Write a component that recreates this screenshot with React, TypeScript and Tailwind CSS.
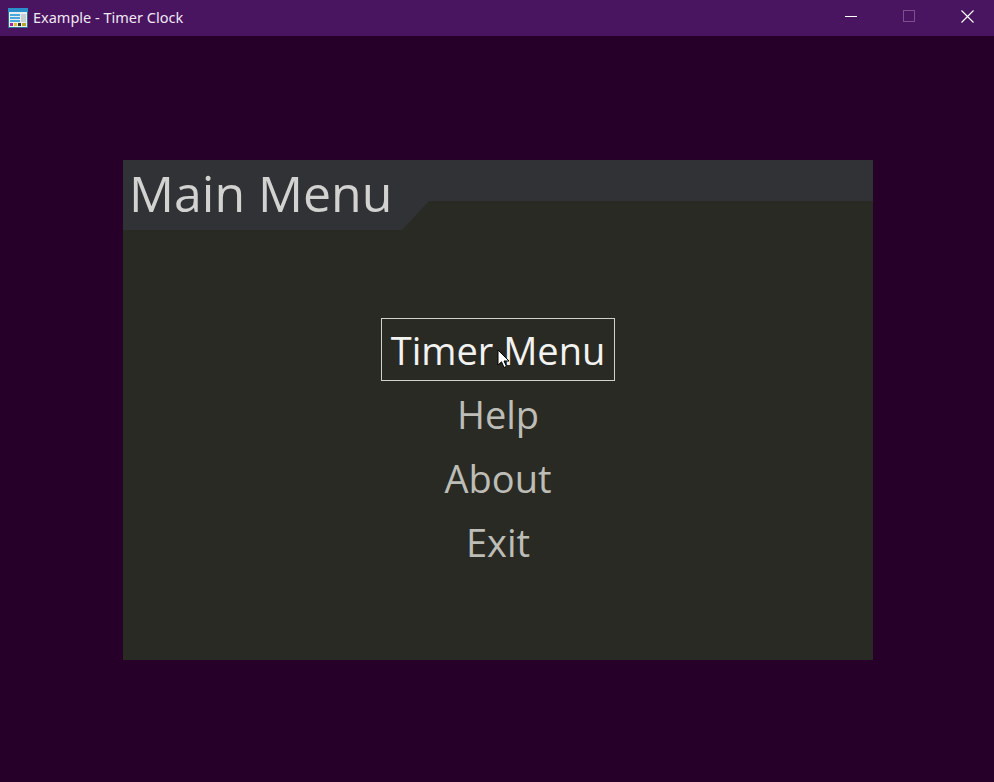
const items = ['Help', 'About', 'Exit'];

function AppIcon() {
  return (
    <svg width="20" height="20" viewBox="0 0 20 20" className="shrink-0">
      <rect x="0.5" y="0.5" width="19" height="19" fill="#e8eef2" stroke="#2a6f8f" />
      <rect x="0" y="0" width="20" height="4" fill="#2b8fc9" />
      <rect x="2" y="6" width="10" height="2" fill="#4aa8dc" />
      <rect x="2" y="9" width="10" height="2" fill="#4aa8dc" />
      <rect x="2" y="12" width="10" height="2" fill="#4aa8dc" />
      <rect x="13" y="6" width="5" height="8" fill="#c9ced3" />
      <rect x="2" y="15" width="3" height="3" fill="#b0249a" />
      <rect x="6" y="15" width="3" height="3" fill="#d8c82a" />
      <rect x="10" y="15" width="3" height="3" fill="#333333" />
      <rect x="14" y="15" width="4" height="3" fill="#b8a62a" />
    </svg>
  );
}

function TitleBar() {
  return (
    <div className="h-9 bg-[#4a1560] flex items-center justify-between pl-2">
      <div className="flex items-center gap-[5px] pb-[1px]">
        <AppIcon />
        <span className="text-[14.5px] text-[#f0e8f4] leading-none font-['Noto_Sans',sans-serif]">Example - Timer Clock</span>
      </div>
      <div className="flex items-center translate-x-[2px]">
        <div className="w-[58px] h-9 flex items-center justify-center">
          <div className="w-3 h-px bg-white -translate-y-[2px]" />
        </div>
        <div className="w-[58px] h-9 flex items-center justify-center">
          <div className="w-3 h-3 border border-[#7d4f90] -translate-y-[2px]" />
        </div>
        <div className="w-[58px] h-9 flex items-center justify-center">
          <svg width="13" height="13" viewBox="0 0 13 13" className="-translate-y-[2px]">
            <path d="M0.5 0.5L12.5 12.5M12.5 0.5L0.5 12.5" stroke="#ffffff" strokeWidth="1.1" />
          </svg>
        </div>
      </div>
    </div>
  );
}

export default function App() {
  return (
    <div className="w-[994px] h-[782px] bg-[#260028] overflow-hidden font-['Open_Sans',sans-serif]">
      <TitleBar />
      <div className="w-[750px] h-[500px] ml-[123px] mt-[124px] bg-[#2a2a24]">
        <div className="h-[70px] bg-[#313236] pl-[6px] [clip-path:polygon(0_0,100%_0,100%_41px,306px_41px,279px_100%,0_100%)]">
          <h1 className="text-[50px] leading-[67px] text-[#d2d2d0]">Main Menu</h1>
        </div>
        <div className="flex flex-col items-center mt-[88px]">
          <div className="relative w-[234px] h-[63px] mb-px border-[1.5px] border-[#d0d0cc] flex items-center justify-center text-[38px] leading-none text-[#f2f2f0]">
            Timer Menu
            <svg width="13" height="20" viewBox="0 0 13 20" className="absolute left-[115px] top-[30px]">
              <path d="M1 1V16L4.5 12.8L7 18.5L9.5 17.4L7 12H12Z" fill="#ffffff" stroke="#000000" strokeWidth="1" />
            </svg>
          </div>
          {items.map((item) => (
            <div key={item} className="h-[64px] flex items-center justify-center text-[38px] leading-none text-[#bdbdb7]">
              {item}
            </div>
          ))}
        </div>
      </div>
    </div>
  );
}
